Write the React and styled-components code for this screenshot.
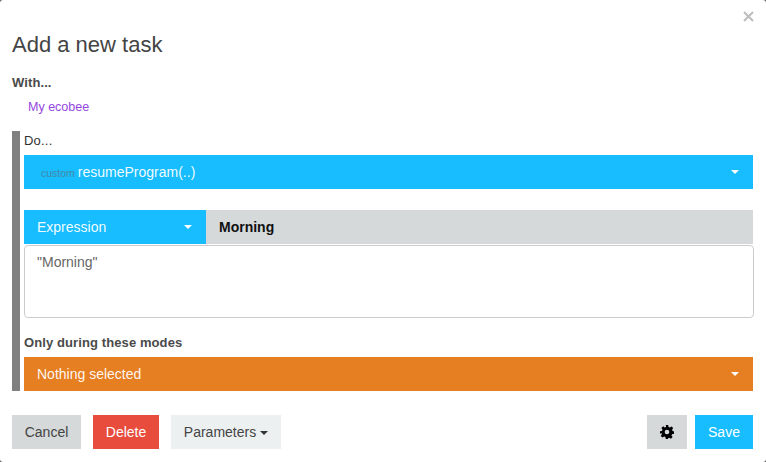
import React from "react";
import styled, { createGlobalStyle } from "styled-components";

const Global = createGlobalStyle`
  html, body { margin: 0; padding: 0; background: #555; }
  body { font-family: "Liberation Sans", Arial, sans-serif; }
  * { box-sizing: border-box; }
`;

const Modal = styled.div`
  width: 766px; height: 462px; background: #fff; border-radius: 3px;
  padding: 0 13px 13px 12px; display: flex; flex-direction: column; color: #444;
  overflow: hidden;
`;
const CloseRow = styled.div`
  height: 33px; display: flex; justify-content: flex-end; align-items: flex-start; padding-top: 11px;
`;
const Close = styled.svg`
  width: 11px; height: 11px; margin-right: -1px; stroke: #bdbdbd; stroke-width: 2; fill: none;
`;
const Title = styled.h4`
  margin: 0; font-size: 22px; line-height: 24px; font-weight: 400; color: #444;
`;
const Label = styled.div`
  font-size: 13px; line-height: 16px; font-weight: 700; color: #4a4a4a; letter-spacing: 0.1px;
`;
const WithLabel = styled(Label)`
  margin-top: 18px;
`;
const Device = styled.div`
  margin: 8px 0 0 16px; font-size: 12.5px; line-height: 16px; color: #9346e0;
`;
const DoBlock = styled.div`
  margin-top: 16px; height: 260px; border-left: 8px solid #808080; padding-left: 4px;
  display: flex; flex-direction: column;
`;
const DoLabel = styled.div`
  font-size: 13px; line-height: 16px; margin-top: 2px; margin-bottom: 6px; color: #333; letter-spacing: 0.2px;
`;
const Select = styled.div`
  height: 34px; background: ${p => p.$bg}; color: #fff; display: flex; align-items: center;
  padding: 0 14px 0 ${p => p.$pl || 13}px; font-size: 14px;
  ${p => p.$w ? `width: ${p.$w}px; flex: none;` : ""}
`;
const Name = styled.span`
  flex: 1; white-space: nowrap; color: rgba(255,255,255,0.95);
`;
const Muted = styled.small`
  font-size: 10.5px; color: #4588a3; margin-right: 3px;
`;
const Caret = styled.span`
  width: 0; height: 0; border-left: 4px solid transparent; border-right: 4px solid transparent;
  border-top: 4px solid #fff; flex: none;
`;
const ParamRow = styled.div`
  display: flex; height: 34px; margin-top: 21px;
`;
const ParamValue = styled.div`
  flex: 1; background: #d5d9da; color: #111; font-size: 14px; font-weight: 700;
  display: flex; align-items: center; padding-left: 13px;
`;
const Textarea = styled.div`
  margin: 1px -1px 0 0; height: 73px; border: 1px solid #ccc; border-radius: 4px; padding: 7px 12px;
  font-size: 14px; line-height: 18px; color: #666;
`;
const ModesLabel = styled(Label)`
  margin-top: 17px; margin-bottom: 6px;
`;
const Footer = styled.div`
  margin-top: 24px; display: flex; gap: 12px; align-items: center;
`;
const Button = styled.button`
  height: 34px; border: 0; border-radius: 0; padding: 0; width: ${p => p.$w}px;
  background: ${p => p.$bg}; color: ${p => p.$fg}; font-family: inherit; font-size: 14px;
  display: flex; align-items: center; justify-content: center; gap: 4px;
`;
const Spacer = styled.div`
  flex: 1;
`;
const RightGroup = styled.div`
  display: flex; gap: 8px;
`;
const SmallCaret = styled(Caret)`
  border-top-color: #333; margin-top: 2px;
`;

const Gear = () => (
  <svg width="14" height="14" viewBox="0 0 24 24" fill="#000">
    <path fillRule="evenodd" d="M10 0h4l.7 3.4 2.1.9L19.7 2.4l2.9 2.9-1.9 2.9.9 2.1L24 11v4l-3.4.7-.9 2.1 1.9 2.9-2.9 2.9-2.9-1.9-2.1.9L13.900 24h-4l-.7-3.400-2.100-.9-2.900 1.900-2.900-2.900 1.900-2.900-.9-2.100L0 14.900v-4l3.400-.7.9-2.100L2.400 5.200l2.900-2.900 2.900 1.900 2.100-.9L10 0zM12 8a4 4 0 1 0 0 8 4 4 0 0 0 0-8z" />
  </svg>
);

export default function App() {
  return (
    <>
      <Global />
      <Modal>
        <CloseRow>
          <Close viewBox="0 0 11 11"><path d="M1 1l9 9M10 1l-9 9" /></Close>
        </CloseRow>
        <Title>Add a new task</Title>
        <WithLabel>With...</WithLabel>
        <Device>My ecobee</Device>
        <DoBlock>
          <DoLabel>Do...</DoLabel>
          <Select $bg="#17bdff" $pl={17}>
            <Name><Muted>custom</Muted>resumeProgram(..)</Name>
            <Caret />
          </Select>
          <ParamRow>
            <Select $bg="#17bdff" $w={182}>
              <Name>Expression</Name>
              <Caret />
            </Select>
            <ParamValue>Morning</ParamValue>
          </ParamRow>
          <Textarea>"Morning"</Textarea>
          <ModesLabel>Only during these modes</ModesLabel>
          <Select $bg="#e67e22">
            <Name>Nothing selected</Name>
            <Caret />
          </Select>
        </DoBlock>
        <Footer>
          <Button $w={69} $bg="#d5d9da" $fg="#444">Cancel</Button>
          <Button $w={66} $bg="#e74c3c" $fg="#fff">Delete</Button>
          <Button $w={110} $bg="#ecf0f1" $fg="#444">Parameters <SmallCaret /></Button>
          <Spacer />
          <RightGroup>
            <Button $w={40} $bg="#d5d9da" $fg="#000" aria-label="Settings"><Gear /></Button>
            <Button $w={58} $bg="#17bdff" $fg="#fff">Save</Button>
          </RightGroup>
        </Footer>
      </Modal>
    </>
  );
}
